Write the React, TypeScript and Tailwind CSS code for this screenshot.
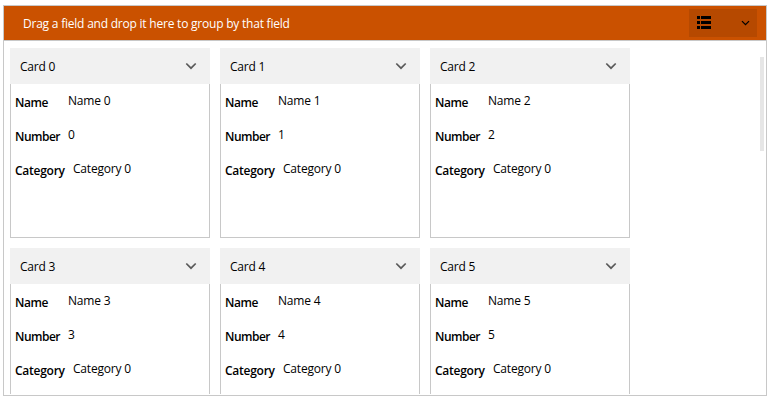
const cards = [0, 1, 2, 3, 4, 5];

function Chevron({ className }: { className: string }) {
  return (
    <svg className={className} viewBox="0 0 12 8" fill="none" stroke="currentColor" strokeWidth="1.7">
      <path d="M1.3 1.5 6 6.2 10.7 1.5" />
    </svg>
  );
}

function Field({ label, value, labelClass }: { label: string; value: string; labelClass: string }) {
  return (
    <div className="flex h-[34px] items-start whitespace-nowrap leading-4">
      <span className={`shrink-0 pt-[11px] font-semibold ${labelClass}`}>{label}</span>
      <span className="pt-[9px] tracking-[-0.2px]">{value}</span>
    </div>
  );
}

function Card({ index }: { index: number }) {
  return (
    <div className="flex h-[190px] w-[200px] flex-col">
      <div className="flex h-9 shrink-0 items-center justify-between bg-[#f1f1f1] pr-[13px] pl-[10px]">
        <span className="pt-0.5 leading-4 tracking-[-0.2px]">Card {index}</span>
        <Chevron className="h-2 w-3 text-[#5a5a5a]" />
      </div>
      <div className="flex-1 border border-t-0 border-[#c8c8c8] pl-1">
        <Field label="Name" value={`Name ${index}`} labelClass="w-[53px] tracking-[-0.4px]" />
        <Field label="Number" value={`${index}`} labelClass="w-[53px] tracking-[-0.5px]" />
        <Field label="Category" value="Category 0" labelClass="w-[58px] tracking-[-0.26px]" />
      </div>
    </div>
  );
}

export default function App() {
  return (
    <div className="h-[400px] w-[769px] overflow-hidden bg-white pt-[5px] pl-[3px] font-['Open_Sans','Noto_Sans',sans-serif] text-[12px] text-black">
      <div className="flex h-[391px] w-[764px] flex-col border border-[#c8c8c8]">
        <div className="flex h-[35px] shrink-0 items-center justify-between border-b border-[#c8c8c8] bg-[#ca5100] pr-[9px] pl-[19px]">
          <span className="pt-0.5 leading-4 tracking-[-0.22px] text-white">Drag a field and drop it here to group by that field</span>
          <div className="flex h-7 w-[68px] items-start justify-between bg-[#b64900] pr-[7px] pl-2">
            <svg className="mt-[7px] h-[13px] w-[14px]" viewBox="0 0 14 13" shapeRendering="crispEdges">
              <path d="M0 0h3v3H0zM4 0h10v3H4zM0 5h3v3H0zM4 5h10v3H4zM0 10h3v3H0zM4 10h10v3H4z" />
            </svg>
            <Chevron className="mt-[11px] h-[6px] w-[9px]" />
          </div>
        </div>
        <div className="flex h-[353px] items-start justify-between overflow-hidden pr-[2px] pl-[6px]">
          <div className="grid grid-cols-[200px_200px_200px] gap-[10px] pt-[7px]">
            {cards.map((index) => (
              <Card key={index} index={index} />
            ))}
          </div>
          <div className="mt-4 h-[94px] w-1 bg-[#e6e6e6]" />
        </div>
      </div>
    </div>
  );
}
